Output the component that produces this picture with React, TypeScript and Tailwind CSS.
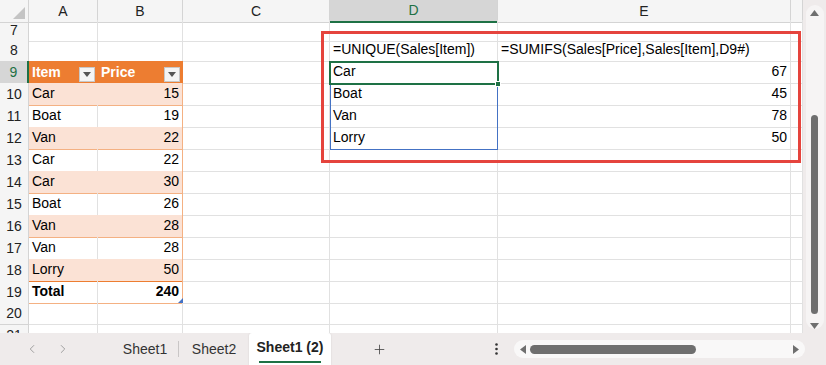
import { ChevronLeft, ChevronRight, Plus } from "lucide-react";

type Cell = {
	text?: string;
	cls?: string;
	right?: boolean;
};

type RowDef = {
	n: number;
	h: string;
	cells: Cell[];
};

const grid = "grid grid-cols-[29px_69px_85px_147px_168px_293px_12px]";
const base = "flex items-end px-[3px] pb-[1px] whitespace-nowrap border-r border-b border-[#e1e1e1]";

const sales: [string, number][] = [
	["Car", 15],
	["Boat", 19],
	["Van", 22],
	["Car", 22],
	["Car", 30],
	["Boat", 26],
	["Van", 28],
	["Van", 28],
	["Lorry", 50],
];

// spilled results, keyed by row
const unique: Record<number, [string, number]> = {
	10: ["Boat", 45],
	11: ["Van", 78],
	12: ["Lorry", 50],
};

function FilterButton() {
	return (
		<div className="ml-auto mb-[1px] flex h-[15px] w-[16px] items-center justify-center border border-[#c8c8c8] bg-[#f4f4f4]">
			<svg width="8" height="5" viewBox="0 0 8 5">
				<path d="M0 0h8L4 5z" fill="#555" />
			</svg>
		</div>
	);
}

function buildRows(): RowDef[] {
	const rows: RowDef[] = [];
	for (let i = 0; i < sales.length; i++) {
		const n = 10 + i;
		const banded = i % 2 === 0;
		const last = i === sales.length - 1;
		const bottom = last ? " border-b-[#ed7d31]" : " border-b-[#f4b183]";
		const fill = banded ? " bg-[#fbe2d5]" : "";
		const u = unique[n];
		rows.push({
			n,
			h: "h-[22px]",
			cells: [
				{ text: sales[i][0], cls: fill + bottom + (banded ? " border-r-[#fbe2d5]" : "") },
				{ text: String(sales[i][1]), right: true, cls: fill + bottom + " border-r-[#f4b183]" },
				{},
				{ text: u ? u[0] : undefined },
				{ text: u ? String(u[1]) : undefined, right: true },
				{},
			],
		});
	}
	rows.push({
		n: 19,
		h: "h-[22px]",
		cells: [
			{ text: "Total", cls: "font-bold border-b-[#f4b183]" },
			{ text: "240", right: true, cls: "font-bold border-b-[#f4b183] border-r-[#f4b183]" },
			{},
			{},
			{},
			{},
		],
	});
	rows.push({ n: 20, h: "h-[22px]", cells: [{}, {}, {}, {}, {}, {}] });
	rows.push({ n: 21, h: "h-[22px]", cells: [{}, {}, {}, {}, {}, {}] });
	return rows;
}

function RowHeader({ n, active }: { n: number; active?: boolean }) {
	return (
		<div
			className={
				"flex items-center justify-center border-b border-r border-[#d4d4d4] text-[14px] " +
				(active ? "bg-[#d6d6d6] text-[#1e7145] border-r-2 border-r-[#1e7145]" : "bg-[#f5f5f5] text-[#222]")
			}
		>
			{n}
		</div>
	);
}

function Row({ r }: { r: RowDef }) {
	return (
		<div className={grid + " " + r.h + " text-[14px] text-black"}>
			<RowHeader n={r.n} />
			{r.cells.map((c, i) => (
				<div key={i} className={base + (c.right ? " justify-end" : "") + (c.cls ? " " + c.cls : "")}>
					{c.text}
				</div>
			))}
			<div className="border-b border-[#e1e1e1]" />
		</div>
	);
}

function Sheet() {
	const rows = buildRows();
	const cols = ["A", "B", "C", "D", "E", ""];
	return (
		<div className="relative h-[333px] flex-1 overflow-hidden bg-white">
			<div className={grid + " h-[20px]"}>
				<div className="relative border-b border-r border-[#d4d4d4] bg-[#f5f5f5]">
					<svg className="absolute bottom-[3px] right-[3px]" width="12" height="12" viewBox="0 0 12 12">
						<path d="M12 0v12H0z" fill="#c4c4c4" />
					</svg>
				</div>
				{cols.map((c, i) => (
					<div
						key={i}
						className={
							"flex items-center justify-center border-r border-b border-[#d4d4d4] text-[14px] " +
							(c === "D" ? "bg-[#d6d6d6] text-[#1e7145] border-b-2 border-b-[#1e7145]" : "bg-[#f5f5f5] text-[#222]")
						}
					>
						{c}
					</div>
				))}
				<div className="border-b border-[#d4d4d4] bg-[#f5f5f5]" />
			</div>

			<Row r={{ n: 7, h: "h-[19px]", cells: [{}, {}, {}, {}, {}, {}] }} />
			<Row
				r={{
					n: 8,
					h: "h-[22px]",
					cells: [{}, {}, {}, { text: "=UNIQUE(Sales[Item])" }, { text: "=SUMIFS(Sales[Price],Sales[Item],D9#)" }, {}],
				}}
			/>

			{/* table header on row 9 */}
			<div className={grid + " h-[22px] text-[14px] text-black"}>
				<RowHeader n={9} active />
				<div className="flex items-end bg-[#ed7d31] px-[3px] pb-[1px] font-bold text-white">
					Item
					<FilterButton />
				</div>
				<div className="flex items-end bg-[#ed7d31] px-[3px] pb-[1px] font-bold text-white">
					Price
					<FilterButton />
				</div>
				<div className={base} />
				<div className={base}>Car</div>
				<div className={base + " justify-end"}>67</div>
				<div className={base} />
				<div className="border-b border-[#e1e1e1]" />
			</div>
			{rows.map((r) => (
				<Row key={r.n} r={r} />
			))}

			{/* active cell, spill range, annotation */}
			<div className="pointer-events-none absolute left-[330px] top-[61px] h-[89px] w-[168px] border border-[#4472c4]" />
			<div className="pointer-events-none absolute left-[329px] top-[61px] h-[24px] w-[170px] border-2 border-[#1e7145]">
				<div className="absolute -bottom-[4px] -right-[4px] h-[6px] w-[6px] border border-white bg-[#1e7145]" />
			</div>
			<div className="pointer-events-none absolute left-[178px] top-[298px] h-[5px] w-[5px] bg-[#4472c4] [clip-path:polygon(100%_0,100%_100%,0_100%)]" />
			<div className="pointer-events-none absolute left-[321px] top-[31px] h-[132px] w-[480px] border-[3px] border-[#e5443d]" />
		</div>
	);
}

function VScroll() {
	return (
		<div className="flex h-[333px] w-[23px] flex-col items-center bg-[#efebeb] pt-[5px]">
			<div className="flex h-[324px] w-[18px] flex-col items-center rounded-full bg-[#f6f4f4] pt-[5px]">
				<svg width="9" height="6" viewBox="0 0 9 6">
					<path d="M4.5 0L9 6H0z" fill="#6f6f6f" />
				</svg>
				<div className="mt-[99px] h-[200px] w-[7px] rounded-full bg-[#6f6f6f]" />
				<svg className="mt-[9px]" width="9" height="6" viewBox="0 0 9 6">
					<path d="M0 0h9L4.5 6z" fill="#6f6f6f" />
				</svg>
			</div>
		</div>
	);
}

function TabBar() {
	return (
		<div className="flex h-[32px] items-center bg-[#efebeb] text-[14px] text-[#333]">
			<div className="flex w-[80px] items-center gap-[17px] pl-[25px] text-[#9a9a9a]">
				<ChevronLeft size={14} strokeWidth={1.6} />
				<ChevronRight size={14} strokeWidth={1.6} />
			</div>
			<div className="flex h-full items-center">
				<div className="w-[98px] pl-[32px] text-center">Sheet1</div>
				<div className="h-[16px] w-px bg-[#c9c6c6]" />
				<div className="w-[70px] text-center">Sheet2</div>
				<div className="flex h-full w-[82px] flex-col items-center justify-center rounded-t-[3px] bg-white font-semibold text-[#222] shadow-[0_0_2px_rgba(0,0,0,0.12)]">
					<span className="mt-[1px]">Sheet1 (2)</span>
					<div className="mt-[3px] h-[2px] w-[62px] bg-[#1e7145]" />
				</div>
			</div>
			<div className="flex w-[96px] justify-center text-[#444]">
				<Plus size={15} strokeWidth={1.3} />
			</div>
			<div className="ml-[59px] flex w-[20px] justify-center">
				<svg width="3" height="12" viewBox="0 0 3 12">
					<circle cx="1.5" cy="1.5" r="1.3" fill="#333" />
					<circle cx="1.5" cy="6" r="1.3" fill="#333" />
					<circle cx="1.5" cy="10.5" r="1.3" fill="#333" />
				</svg>
			</div>
			<div className="ml-[8px] flex h-[18px] w-[291px] items-center rounded-full bg-[#f9f8f8] px-[6px]">
				<svg width="6" height="9" viewBox="0 0 6 9">
					<path d="M6 0v9L0 4.5z" fill="#6f6f6f" />
				</svg>
				<div className="ml-[4px] h-[9px] w-[166px] rounded-full bg-[#6f6f6f]" />
				<svg className="ml-auto" width="6" height="9" viewBox="0 0 6 9">
					<path d="M0 0v9l6-4.5z" fill="#6f6f6f" />
				</svg>
			</div>
		</div>
	);
}

export default function App() {
	return (
		<div className="h-[365px] w-[826px] overflow-hidden bg-white font-['Liberation_Sans',Arial,sans-serif]">
			<div className="flex">
				<Sheet />
				<VScroll />
			</div>
			<TabBar />
		</div>
	);
}
